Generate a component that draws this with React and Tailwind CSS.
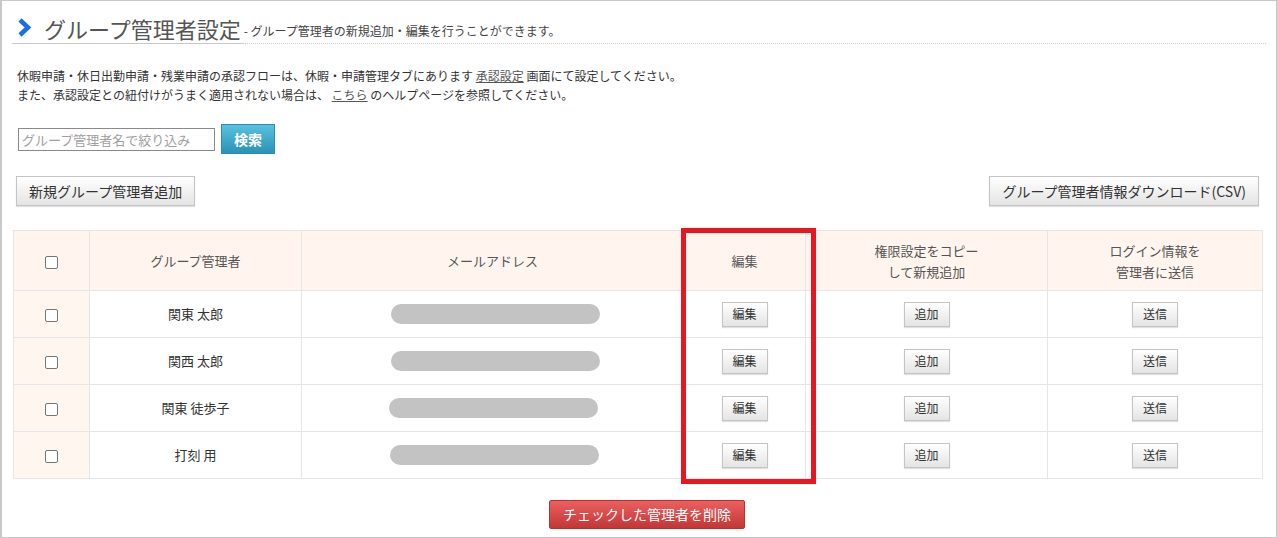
import React from "react";

const btn =
  "border border-[#c4c4c4] bg-gradient-to-b from-white to-[#e4e4e4] text-[#333] shadow-[0_1px_1px_rgba(0,0,0,0.12)]";

const rows = [
  { name: "関東 太郎", pill: "ml-[89px]" },
  { name: "関西 太郎", pill: "ml-[89px]" },
  { name: "関東 徒歩子", pill: "ml-[87px]" },
  { name: "打刻 用", pill: "ml-[88px]" },
];

function Check() {
  return (
    <span className="inline-block w-[13px] h-[13px] rounded-[2px] border border-[#767676] bg-white align-middle" />
  );
}

function SmallBtn({ children }) {
  return (
    <button className={`${btn} w-[46px] h-[25px] text-[12px] leading-none`}>{children}</button>
  );
}

export default function App() {
  return (
    <div
      className="relative w-[1277px] h-[538px] overflow-hidden bg-white border border-l-2 border-[#c8c8c8] text-[#333]"
      style={{ fontFamily: '"Noto Sans CJK JP", "Noto Sans", sans-serif' }}
    >
      {/* Header */}
      <div className="mx-[10px] mt-[11px] flex items-end border-b border-dotted border-[#cfcfcf]">
        <div className="flex items-center h-[32px] pl-[5px] pr-[2px] border-b border-[#c8c8c8] -mb-px">
          <svg width="15" height="19" viewBox="0 0 15 19" className="mr-[12px]">
            <path d="M3 2 L11 9.5 L3 17" fill="none" stroke="#1a6fe6" strokeWidth="4.5" strokeLinejoin="miter" />
          </svg>
          <span className="text-[22px] leading-none text-[#555]">グループ管理者設定</span>
        </div>
        <span className="text-[12px] leading-none text-[#444] pb-[6px] pl-[1px]">
          - グループ管理者の新規追加・編集を行うことができます。
        </span>
      </div>

      {/* Description */}
      <div className="mt-[22px] ml-[15px] text-[12px] leading-[19px] text-[#333]">
        <p>
          休暇申請・休日出勤申請・残業申請の承認フローは、休暇・申請管理タブにあります{" "}
          <span className="underline text-[#555]">承認設定</span> 画面にて設定してください。
        </p>
        <p>
          また、承認設定との紐付けがうまく適用されない場合は、{" "}
          <span className="underline text-[#555]">こちら</span> のヘルプページを参照してください。
        </p>
      </div>

      {/* Search */}
      <div className="mt-[20px] ml-[16px] flex items-center gap-[6px]">
        <input
          className="w-[197px] h-[23px] border border-[#8a8a8a] px-[3px] text-[13px] placeholder:text-[#a0a0a0] outline-none"
          placeholder="グループ管理者名で絞り込み"
        />
        <button className="w-[54px] h-[30px] border border-[#2a8db2] bg-gradient-to-b from-[#58c2df] to-[#2a92b6] text-white text-[14px] font-bold">
          検索
        </button>
      </div>

      {/* Action buttons */}
      <div className="mt-[22px] ml-[14px] mr-[17px] flex justify-between">
        <button className={`${btn} h-[30px] px-[12px] text-[14px]`}>新規グループ管理者追加</button>
        <button className={`${btn} h-[30px] px-[12px] text-[14px]`}>グループ管理者情報ダウンロード(CSV)</button>
      </div>

      {/* Table */}
      <div className="mt-[24px] ml-[11px]">
        <table className="w-[1249px] border-collapse table-fixed text-center">
          <colgroup>
            <col className="w-[76px]" />
            <col className="w-[212px]" />
            <col className="w-[382px]" />
            <col className="w-[122px]" />
            <col className="w-[242px]" />
            <col className="w-[215px]" />
          </colgroup>
          <thead>
            <tr className="h-[60px] bg-[#fff5ee] text-[13px] text-[#555] leading-[21px]">
              <th className="border border-[#e6e6e6] font-normal"><Check /></th>
              <th className="border border-[#e6e6e6] font-normal">グループ管理者</th>
              <th className="border border-[#e6e6e6] font-normal">メールアドレス</th>
              <th className="border border-[#e6e6e6] font-normal">編集</th>
              <th className="border border-[#e6e6e6] font-normal">権限設定をコピー<br />して新規追加</th>
              <th className="border border-[#e6e6e6] font-normal">ログイン情報を<br />管理者に送信</th>
            </tr>
          </thead>
          <tbody>
            {rows.map((r) => (
              <tr key={r.name} className="h-[47px] text-[13px]">
                <td className="border border-[#e6e6e6] bg-[#fff6f0]"><Check /></td>
                <td className="border border-[#e6e6e6]">{r.name}</td>
                <td className="border border-[#e6e6e6] text-left">
                  <div className={`${r.pill} w-[209px] h-[20px] rounded-full bg-[#c3c3c3]`} />
                </td>
                <td className="border border-[#e6e6e6]"><SmallBtn>編集</SmallBtn></td>
                <td className="border border-[#e6e6e6]"><SmallBtn>追加</SmallBtn></td>
                <td className="border border-[#e6e6e6]"><SmallBtn>送信</SmallBtn></td>
              </tr>
            ))}
          </tbody>
        </table>
      </div>

      {/* Delete */}
      <div className="mt-[21px] flex justify-center pl-[16px]">
        <button className="h-[29px] px-[13px] rounded-[2px] border border-[#b83232] bg-gradient-to-b from-[#ec5f5f] to-[#c23636] text-white text-[14px]">
          チェックした管理者を削除
        </button>
      </div>

      {/* Red highlight overlay */}
      <div className="absolute left-[679px] top-[227px] w-[135px] h-[256px] border-[5px] border-[#e8161f] pointer-events-none" />
    </div>
  );
}
